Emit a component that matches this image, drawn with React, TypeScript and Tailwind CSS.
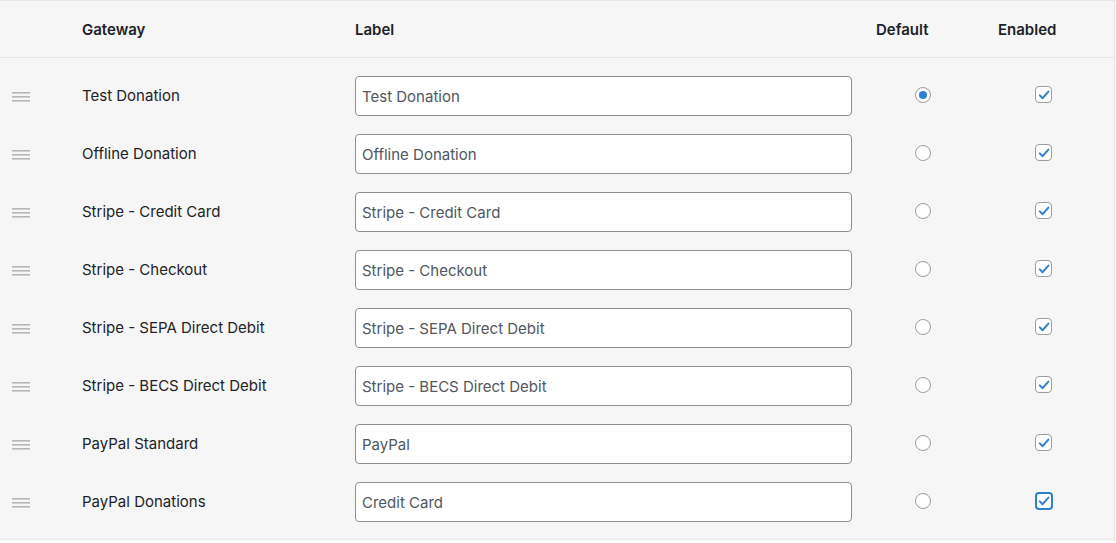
import React from 'react';

interface Gateway {
  id: string;
  name: string;
  label: string;
}

const gateways: Gateway[] = [
  { id: 'manual', name: 'Test Donation', label: 'Test Donation' },
  { id: 'offline', name: 'Offline Donation', label: 'Offline Donation' },
  { id: 'stripe', name: 'Stripe - Credit Card', label: 'Stripe - Credit Card' },
  { id: 'stripe_checkout', name: 'Stripe - Checkout', label: 'Stripe - Checkout' },
  { id: 'stripe_sepa', name: 'Stripe - SEPA Direct Debit', label: 'Stripe - SEPA Direct Debit' },
  { id: 'stripe_becs', name: 'Stripe - BECS Direct Debit', label: 'Stripe - BECS Direct Debit' },
  { id: 'paypal', name: 'PayPal Standard', label: 'PayPal' },
  { id: 'paypal_commerce', name: 'PayPal Donations', label: 'Credit Card' },
];

function DragHandle() {
  return (
    <svg width="18" height="10" viewBox="0 0 18 10" className="text-[#b4b7ba]">
      <rect x="0" y="0" width="18" height="1.6" fill="currentColor" />
      <rect x="0" y="4" width="18" height="1.6" fill="currentColor" />
      <rect x="0" y="8" width="18" height="1.6" fill="currentColor" />
    </svg>
  );
}

function Radio({ checked, onChange }: { checked: boolean; onChange: () => void }) {
  return (
    <button
      type="button"
      onClick={onChange}
      className="w-4 h-4 rounded-full border border-[#9a9da1] bg-white flex items-center justify-center"
    >
      {checked && <span className="w-2 h-2 rounded-full bg-[#2f7fd1]" />}
    </button>
  );
}

function Checkbox({ checked, focused, onChange }: { checked: boolean; focused?: boolean; onChange: () => void }) {
  return (
    <button
      type="button"
      onClick={onChange}
      className={
        focused
          ? 'w-[18px] h-[18px] rounded-[4px] border-2 border-[#2f7fd1] bg-white flex items-center justify-center'
          : 'w-[17px] h-[17px] rounded-[4px] border border-[#9a9da1] bg-white flex items-center justify-center'
      }
    >
      {checked && (
        <svg width="12" height="12" viewBox="0 0 12 12">
          <path d="M1.8 6.4 L4.6 9.2 L10.4 2.6" fill="none" stroke="#2f7fd1" strokeWidth="2" strokeLinecap="round" strokeLinejoin="round" />
        </svg>
      )}
    </button>
  );
}

export default function App() {
  const [defaultId, setDefaultId] = React.useState('manual');
  const [enabled, setEnabled] = React.useState<Record<string, boolean>>(
    Object.fromEntries(gateways.map(g => [g.id, true]))
  );
  const [labels, setLabels] = React.useState<Record<string, string>>(
    Object.fromEntries(gateways.map(g => [g.id, g.label]))
  );

  return (
    <div className="w-[1116px] h-[543px] bg-[#fbfbfb] font-['Inter','Liberation_Sans',sans-serif]">
      <div className="w-[1115px] border-t border-r border-b border-[#e6e6e6] bg-[#f6f6f6]">
        <div className="grid grid-cols-[82px_273px_521px_122px_1fr] h-[57px] pt-[2px] items-center border-b border-[#e6e6e6] text-[15px] font-semibold text-[#1d2327]">
          <div />
          <div>Gateway</div>
          <div>Label</div>
          <div>Default</div>
          <div>Enabled</div>
        </div>
        <div className="pt-[9px] pb-[8px]">
          {gateways.map((g, i) => (
            <div key={g.id} className="grid grid-cols-[82px_273px_521px_122px_1fr] h-[58px] items-center">
              <div className="pl-3 pt-[1px] flex items-center">
                <DragHandle />
              </div>
              <div className="text-[15px] text-[#1d2327] pt-[1px]">{g.name}</div>
              <div>
                <input
                  value={labels[g.id]}
                  onChange={e => setLabels({ ...labels, [g.id]: e.target.value })}
                  className="w-[497px] h-[40px] px-[6px] rounded-[4px] border border-[#8c8f94] bg-white text-[15px] text-[#50575e] outline-none font-['Inter','Liberation_Sans',sans-serif]"
                />
              </div>
              <div className="pl-[39px] pb-[2px] flex items-center">
                <Radio checked={defaultId === g.id} onChange={() => setDefaultId(g.id)} />
              </div>
              <div className="pl-[37px] pb-[3px] flex items-center">
                <Checkbox
                  checked={enabled[g.id]}
                  focused={i === gateways.length - 1}
                  onChange={() => setEnabled({ ...enabled, [g.id]: !enabled[g.id] })}
                />
              </div>
            </div>
          ))}
        </div>
      </div>
    </div>
  );
}
